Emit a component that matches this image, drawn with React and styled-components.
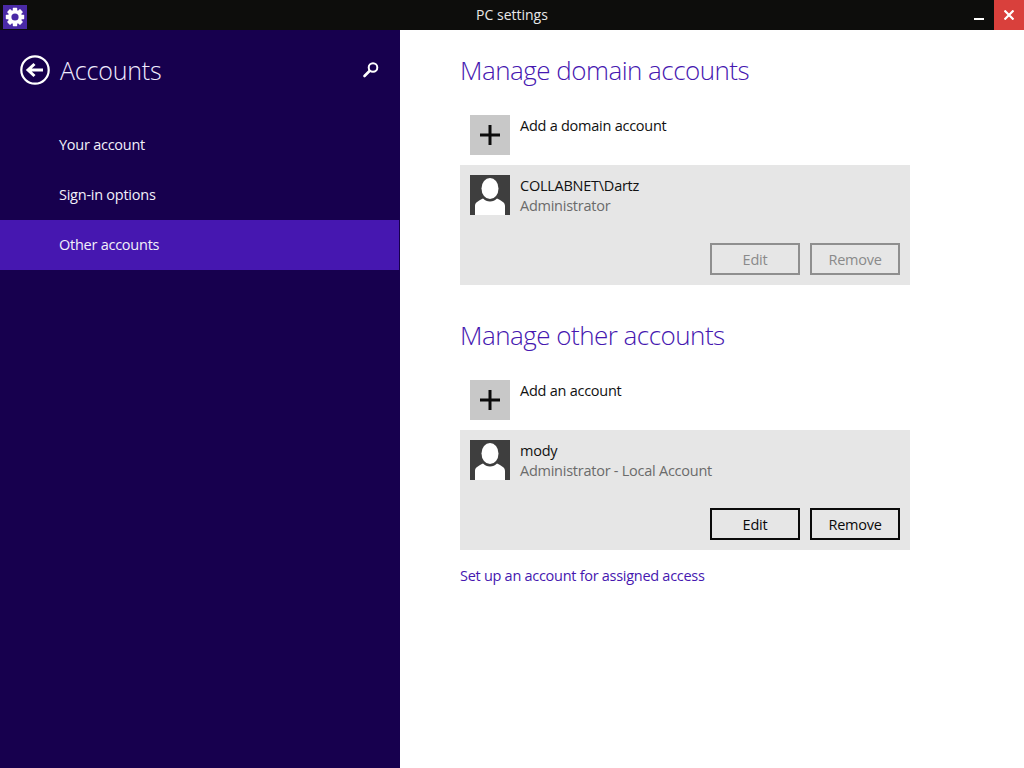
import React from "react";
import styled, { createGlobalStyle } from "styled-components";

const Global = createGlobalStyle`
  html, body { margin: 0; padding: 0; background: #fff; overflow: hidden; }
  body { font-family: "Open Sans", "Noto Sans", sans-serif; }
  * { box-sizing: border-box; }
`;
const ACCENT = "#4617b0";

const Page = styled.div`
  width: 1024px; height: 768px; display: flex; flex-direction: column; overflow: hidden;
`;
const TitleBar = styled.header`
  height: 30px; flex: none; background: #0d0d0c; display: grid;
  grid-template-columns: 1fr auto 1fr; align-items: center; color: #e8e8e8;
`;
const AppIcon = styled.div`
  width: 24px; height: 24px; margin: 3px 0 0 3px; background: #4a2aa6; display: flex;
  align-items: center; justify-content: center;
`;
const TitleText = styled.div`
  font-size: 14px; line-height: 30px;
`;
const WindowControls = styled.div`
  display: flex; justify-content: flex-end; align-items: stretch; height: 30px;
`;
const Minimize = styled.div`
  width: 46px; display: flex; justify-content: flex-end; padding: 18px 10px 0 0;
  &::before { content: ""; width: 10px; height: 2px; background: #fff; }
`;
const Close = styled.div`
  width: 30px; background: #d9403c; display: flex; align-items: center; justify-content: center;
`;
const Body = styled.div`
  flex: 1; display: flex; min-height: 0;
`;
const Sidebar = styled.nav`
  width: 400px; flex: none; background: #17004e; color: #fff; padding-right: 1px;
`;
const SideHeader = styled.div`
  height: 80px; display: flex; align-items: center; padding: 0 20px;
`;
const BackIcon = styled.svg`
  width: 30px; height: 30px; flex: none;
`;
const SideTitle = styled.h1`
  font-size: 25px; font-weight: 300; margin: 0 0 0 10px; flex: 1; letter-spacing: -0.2px;
  line-height: 36px; color: #f0ecff;
`;
const SearchIcon = styled.svg`
  width: 18px; height: 18px; margin-right: -1px;
`;
const NavList = styled.div`
  display: flex; flex-direction: column; margin-top: 10px;
`;
const NavItem = styled.div`
  height: 50px; padding: 0 0 2px 59px; display: flex; align-items: center; font-size: 14.5px;
  letter-spacing: -0.25px; background: ${(p) => (p.$active ? ACCENT : "transparent")};
  color: #f2f0fa;
`;
const Main = styled.main`
  flex: 1; background: #fff; padding: 21px 114px 0 60px;
`;
const Section = styled.section`
  display: flex; flex-direction: column;
  & + & { margin-top: 31px; }
`;
const Heading = styled.h2`
  margin: 0; font-size: 26px; font-weight: 300; line-height: 38px; color: ${ACCENT};
  letter-spacing: -0.52px;
`;
const AddRow = styled.div`
  display: flex; gap: 10px; margin: 26px 0 10px 10px; height: 40px;
`;
const AddTile = styled.div`
  width: 40px; height: 40px; background: #c8c8c8; display: flex; align-items: center; justify-content: center;
`;
const AddLabel = styled.div`
  font-size: 14.5px; line-height: 22px; color: #111; letter-spacing: -0.25px;
`;
const Card = styled.div`
  width: 450px; height: 120px; background: #e6e6e6; padding: 10px; display: flex; flex-direction: column;
  justify-content: space-between;
`;
const UserRow = styled.div`
  display: flex; gap: 10px;
`;
const Avatar = styled.svg`
  width: 40px; height: 40px; flex: none; display: block;
`;
const UserText = styled.div`
  display: flex; flex-direction: column; font-size: 14.5px; line-height: 20px; letter-spacing: -0.25px;
  padding-top: 1px;
`;
const UserName = styled.div`
  color: #111;
`;
const UserRole = styled.div`
  color: #6b6b6b;
`;
const Actions = styled.div`
  display: flex; justify-content: flex-end; gap: 10px;
`;
const ActionButton = styled.button`
  width: 90px; height: 32px; padding: 0; background: transparent; font-family: inherit; font-size: 14.5px;
  letter-spacing: -0.25px;
  border: 2px solid ${(p) => (p.disabled ? "#8f8f8f" : "#0a0a0a")};
  color: ${(p) => (p.disabled ? "#8a8a8a" : "#0a0a0a")};
`;
const LinkText = styled.a`
  display: block; margin-top: 15px; font-size: 14.5px; line-height: 22px; color: ${ACCENT}; letter-spacing: -0.28px;
`;

const Gear = () => (
  <svg width="20" height="20" viewBox="0 0 20 20">
    <g fill="#fff">
      {[0, 45, 90, 135].map((a) => (
        <rect key={a} x="7.8" y="0.8" width="4.4" height="18.4" rx="0.6" transform={`rotate(${a} 10 10)`} />
      ))}
      <circle cx="10" cy="10" r="7" />
    </g>
    <circle cx="10" cy="10" r="3.6" fill="#4a2aa6" />
  </svg>
);
const Plus = () => (
  <svg width="20" height="20" viewBox="0 0 20 20">
    <path d="M0 10h20M10 0v20" stroke="#0c0c0c" strokeWidth="3" />
  </svg>
);
const User = () => (
  <Avatar viewBox="0 0 40 40">
    <rect width="40" height="40" fill="#3e3e3e" />
    <path d="M5 40v-9c0-3 2-4.500 8-7.500 2 2 4 3 7 3s5-1 7-3c6 3 8 4.500 8 7.500v9z" fill="#fff" />
    <ellipse cx="20" cy="13.500" rx="8.500" ry="10.500" fill="#fff" />
  </Avatar>
);

function Account({ name, role, disabled }) {
  return (
    <Card>
      <UserRow>
        <User />
        <UserText>
          <UserName>{name}</UserName>
          <UserRole>{role}</UserRole>
        </UserText>
      </UserRow>
      <Actions>
        <ActionButton disabled={disabled}>Edit</ActionButton>
        <ActionButton disabled={disabled}>Remove</ActionButton>
      </Actions>
    </Card>
  );
}

export default function App() {
  return (
    <Page>
      <Global />
      <TitleBar>
        <AppIcon><Gear /></AppIcon>
        <TitleText>PC settings</TitleText>
        <WindowControls>
          <Minimize />
          <Close>
            <svg width="10" height="10" viewBox="0 0 10 10">
              <path d="M.5.5l9 9M9.500.5l-9 9" stroke="#fff" strokeWidth="2.2" />
            </svg>
          </Close>
        </WindowControls>
      </TitleBar>
      <Body>
        <Sidebar>
          <SideHeader>
            <BackIcon viewBox="0 0 30 30">
              <circle cx="15" cy="15" r="13.700" fill="none" stroke="#fff" strokeWidth="2.200" />
              <path d="M23 15H9M14.500 9l-6.500 6 6.500 6" fill="none" stroke="#fff" strokeWidth="3" />
            </BackIcon>
            <SideTitle>Accounts</SideTitle>
            <SearchIcon viewBox="0 0 18 18">
              <circle cx="11" cy="6.500" r="4.300" fill="none" stroke="#fff" strokeWidth="2" />
              <path d="M7.500 10L2.500 15" stroke="#fff" strokeWidth="2.600" strokeLinecap="round" />
            </SearchIcon>
          </SideHeader>
          <NavList>
            <NavItem>Your account</NavItem>
            <NavItem>Sign-in options</NavItem>
            <NavItem $active>Other accounts</NavItem>
          </NavList>
        </Sidebar>
        <Main>
          <Section>
            <Heading>Manage domain accounts</Heading>
            <AddRow>
              <AddTile><Plus /></AddTile>
              <AddLabel>Add a domain account</AddLabel>
            </AddRow>
            <Account name="COLLABNET\Dartz" role="Administrator" disabled />
          </Section>
          <Section>
            <Heading>Manage other accounts</Heading>
            <AddRow>
              <AddTile><Plus /></AddTile>
              <AddLabel>Add an account</AddLabel>
            </AddRow>
            <Account name="mody" role="Administrator - Local Account" />
          </Section>
          <LinkText>Set up an account for assigned access</LinkText>
        </Main>
      </Body>
    </Page>
  );
}
